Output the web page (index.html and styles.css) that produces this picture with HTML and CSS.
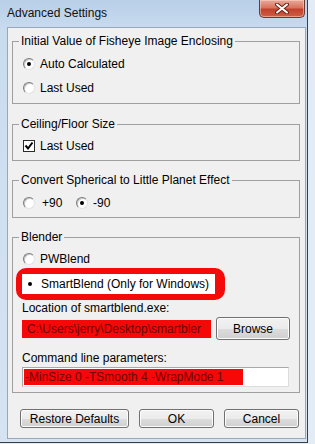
FILE: index.html
```html
<!DOCTYPE html>
<html>
<head>
<meta charset="utf-8">
<link rel="stylesheet" href="styles.css">
</head>
<body>
<div class="window">
  <div class="titlebar">
    <span class="title">Advanced Settings</span>
    <div class="close">
      <svg width="14" height="11" viewBox="0 0 14 11"><path d="M2 1.5 L12 9.5 M12 1.5 L2 9.5" stroke="#6a2418" stroke-width="4" stroke-linecap="round"/><path d="M2 1.5 L12 9.5 M12 1.5 L2 9.5" stroke="#fff" stroke-width="2" stroke-linecap="round"/></svg>
    </div>
  </div>
  <div class="panel">
    <fieldset class="group g1">
      <legend>Initial Value of Fisheye Image Enclosing</legend>
      <div class="row"><span class="radio on"></span><span>Auto Calculated</span></div>
      <div class="row"><span class="radio"></span><span>Last Used</span></div>
    </fieldset>
    <fieldset class="group g2">
      <legend>Ceiling/Floor Size</legend>
      <div class="row"><span class="check"><svg width="10" height="10" viewBox="0 0 10 10"><path d="M1.5 4.5 L4 7.5 L8.5 1.5" stroke="#000" stroke-width="2" fill="none"/></svg></span><span>Last Used</span></div>
    </fieldset>
    <fieldset class="group g3">
      <legend>Convert Spherical to Little Planet Effect</legend>
      <div class="row">
        <span class="opt first"><span class="radio"></span><span>+90</span></span>
        <span class="opt"><span class="radio on"></span><span>-90</span></span>
      </div>
    </fieldset>
    <fieldset class="group g4">
      <legend>Blender</legend>
      <div class="row"><span class="radio"></span><span>PWBlend</span></div>
      <div class="mark">
        <div class="markin"><span class="radio on"></span><span>SmartBlend (Only for Windows)</span></div>
      </div>
      <div class="label">Location of smartblend.exe:</div>
      <div class="inrow">
        <div class="field red">C:\Users\jerry\Desktop\smartbler</div>
        <div class="btn browse">Browse</div>
      </div>
      <div class="label l2">Command line parameters:</div>
      <div class="field wide"><span class="sel">-MinSize 0 -TSmooth 4 -WrapMode 1</span></div>
    </fieldset>
    <div class="buttons">
      <div class="btn restore">Restore Defaults</div>
      <div class="btn ok">OK</div>
      <div class="btn cancel">Cancel</div>
    </div>
  </div>
</div>
</body>
</html>
```
FILE: styles.css
```css
* { box-sizing: border-box; }
html, body {
  margin: 0;
  padding: 0;
  width: 315px;
  height: 444px;
  overflow: hidden;
  background: #e3ebf4;
  font-family: "Liberation Sans", Arial, sans-serif;
  font-size: 12px;
  color: #000;
}
.window {
  width: 308px;
  height: 443px;
  border-right: 1px solid #3a3f46;
  border-bottom: 1px solid #3a3f46;
  background: linear-gradient(to bottom, #b8cfe8 0px, #c9dbef 30px, #cfe0f1 200px, #d5e3f2 443px);
  display: flex;
  flex-direction: column;
}
.titlebar {
  height: 27px;
  display: flex;
  align-items: flex-start;
  padding-left: 7px;
  padding-right: 2px;
}
.title {
  margin-top: 6px;
  line-height: 15px;
  color: #111;
}
.close {
  margin-left: auto;
  width: 46px;
  height: 18px;
  border: 1px solid #6b3a33;
  border-top: none;
  border-radius: 0 0 5px 5px;
  background: linear-gradient(to bottom, #e9a99b 0%, #d9735f 45%, #c2412a 55%, #cf5f45 100%);
  box-shadow: inset 0 0 0 1px rgba(255,220,210,0.5);
  display: flex;
  align-items: center;
  justify-content: center;
}
.close svg { display: block; }
.panel {
  margin-left: 7px;
  width: 299px;
  height: 412px;
  border: 1px solid #97a8bb;
  background: #f0f0f0;
  padding: 0 5px 0 4px;
  display: flex;
  flex-direction: column;
}
.group {
  margin: 0;
  border: 1px solid #a0a0a0;
  padding: 0 0 0 9px;
  min-width: 0;
}
.group legend {
  margin-left: -3px;
  padding: 0 2px;
  line-height: 14px;
}
.g1 { margin-top: 6px; padding-top: 4px; padding-bottom: 3px; }
.g2 { margin-top: 13px; padding-top: 3px; padding-bottom: 2px; }
.g3 { margin-top: 12px; padding-top: 4px; padding-bottom: 2px; }
.g4 { margin-top: 12px; padding-top: 3px; padding-bottom: 5px; }
.row {
  height: 24px;
  display: flex;
  align-items: center;
}
.radio {
  width: 12px;
  height: 12px;
  margin-left: 1px;
  margin-right: 5px;
  border-radius: 50%;
  border: 1px solid;
  border-color: #7a7a7a #e2e2e2 #e2e2e2 #7a7a7a;
  background: #fff;
  box-shadow: inset 1px 1px 0 #c8c8c8;
  display: flex;
  align-items: center;
  justify-content: center;
  flex: none;
}
.radio.on::after {
  content: "";
  width: 4px;
  height: 4px;
  border-radius: 50%;
  background: #000;
}
.check {
  width: 12px;
  height: 12px;
  margin-left: 1px;
  margin-right: 5px;
  border: 1px solid #2b2b2b;
  background: #fff;
  display: flex;
  align-items: center;
  justify-content: center;
  flex: none;
}
.check svg { display: block; }
.opt { display: flex; align-items: center; }
.opt.first { width: 53px; }
.opt.first .radio { margin-right: 7px; }
.mark {
  margin-top: -3px;
  margin-left: -6px;
  width: 209px;
  height: 32px;
  background: #f50a0a;
  border-radius: 10px;
  padding: 6px 10px 6px 6px;
}
.markin {
  height: 20px;
  background: #fff;
  display: flex;
  align-items: center;
  padding-left: 1px;
}
.markin .radio {
  border-color: #fff;
  box-shadow: none;
}
.label {
  height: 16px;
  line-height: 16px;
}
.l2 { margin-top: 10px; }
.inrow {
  margin-top: 1px;
  height: 23px;
  display: flex;
  align-items: center;
  gap: 5px;
}
.field {
  height: 18px;
  border: 1px solid #b4b4b4;
  white-space: nowrap;
  overflow: hidden;
  line-height: 16px;
  padding-left: 4px;
}
.field.red {
  width: 189px;
  background: #f70808;
  border-color: #f70808;
  color: #6e0000;
}
.field.wide {
  margin-top: 1px;
  width: 267px;
  height: 20px;
  background: #fff;
  border-color: #a8a8a8 #dcdcdc #dcdcdc #a8a8a8;
  padding: 1px 0 0 1px;
}
.sel {
  display: block;
  width: 219px;
  height: 16px;
  background: #f70808;
  color: #6e0000;
  padding-left: 1px;
}
.btn {
  height: 23px;
  border: 1px solid #707070;
  border-radius: 3px;
  background: linear-gradient(to bottom, #f2f2f2 0%, #ebebeb 50%, #dddddd 51%, #cfcfcf 100%);
  box-shadow: inset 0 0 0 1px #fcfcfc;
  display: flex;
  align-items: center;
  justify-content: center;
}
.browse { width: 74px; }
.buttons {
  margin-top: 16px;
  display: flex;
  gap: 10px;
  padding-left: 8px;
}
.buttons .btn { height: 19px; }
.restore { width: 109px; }
.ok { width: 75px; }
.cancel { width: 75px; }
```
